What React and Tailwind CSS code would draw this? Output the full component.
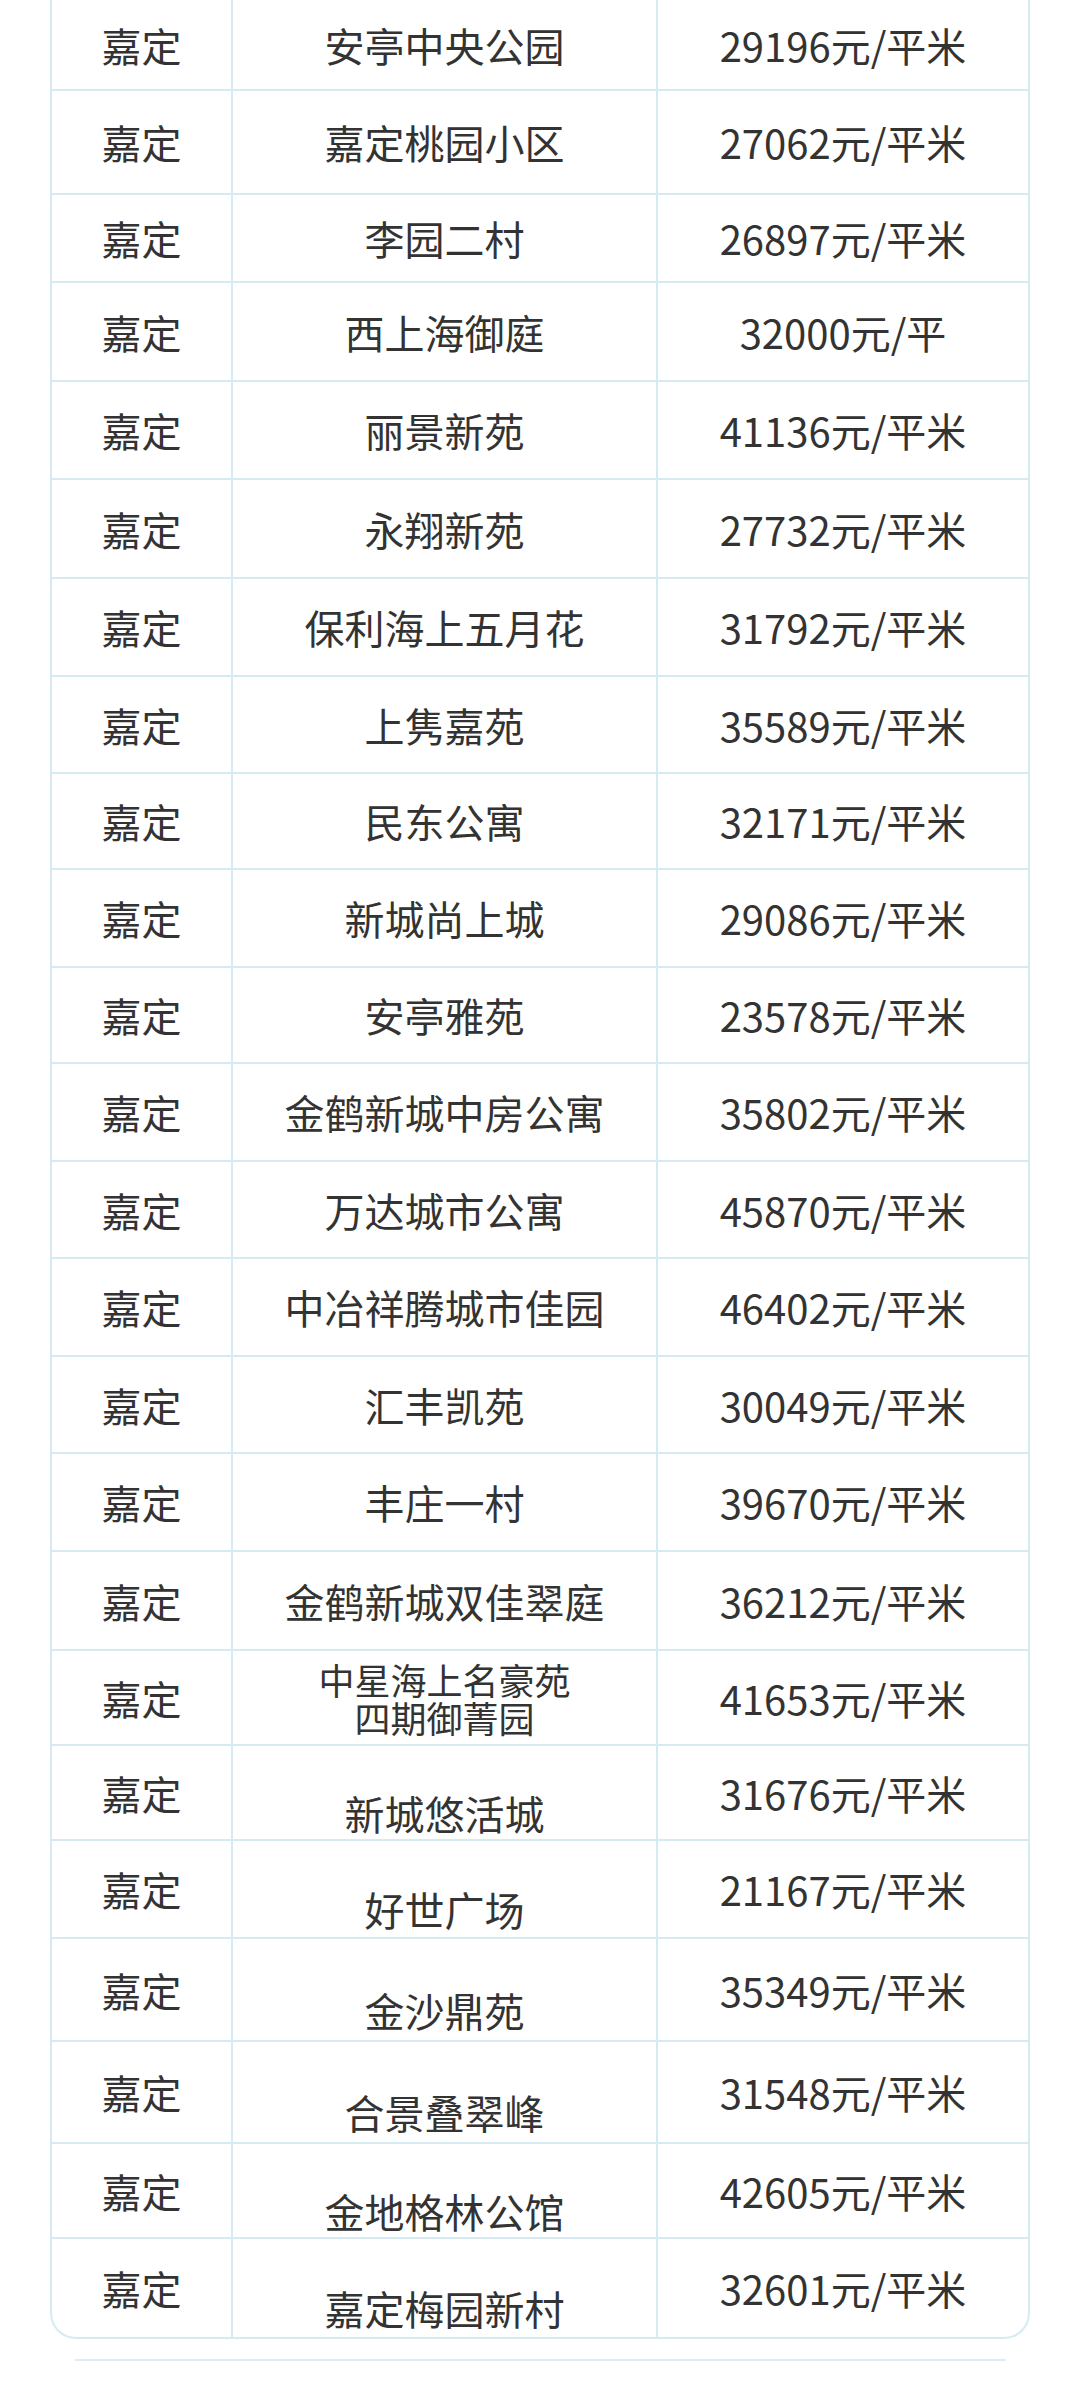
import React from "react";

// 嘉定 小区均价表（截图中段）
const ROWS = [
  { name: "安亭中央公园", price: "29196元/平米", h: 89, first: true },
  { name: "嘉定桃园小区", price: "27062元/平米", h: 104 },
  { name: "李园二村", price: "26897元/平米", h: 88 },
  { name: "西上海御庭", price: "32000元/平", h: 99 },
  { name: "丽景新苑", price: "41136元/平米", h: 98 },
  { name: "永翔新苑", price: "27732元/平米", h: 99 },
  { name: "保利海上五月花", price: "31792元/平米", h: 98 },
  { name: "上隽嘉苑", price: "35589元/平米", h: 97 },
  { name: "民东公寓", price: "32171元/平米", h: 96 },
  { name: "新城尚上城", price: "29086元/平米", h: 98 },
  { name: "安亭雅苑", price: "23578元/平米", h: 96 },
  { name: "金鹤新城中房公寓", price: "35802元/平米", h: 98 },
  { name: "万达城市公寓", price: "45870元/平米", h: 97 },
  { name: "中冶祥腾城市佳园", price: "46402元/平米", h: 98 },
  { name: "汇丰凯苑", price: "30049元/平米", h: 97 },
  { name: "丰庄一村", price: "39670元/平米", h: 98 },
  { name: "金鹤新城双佳翠庭", price: "36212元/平米", h: 99 },
  { name: ["中星海上名豪苑", "四期御菁园"], price: "41653元/平米", h: 95 },
  { name: "新城悠活城", price: "31676元/平米", h: 95, shift: true },
  { name: "好世广场", price: "21167元/平米", h: 98, shift: true },
  { name: "金沙鼎苑", price: "35349元/平米", h: 103, shift: true },
  { name: "合景叠翠峰", price: "31548元/平米", h: 102, shift: true },
  { name: "金地格林公馆", price: "42605元/平米", h: 95, shift: true },
  { name: "嘉定梅园新村", price: "32601元/平米", h: 100, shift: true },
];

const FONT = { fontFamily: '"Noto Sans CJK SC", "Noto Sans", sans-serif' };

function Row({ row }) {
  const twoLine = Array.isArray(row.name);
  return (
    <div
      className={[
        "grid grid-cols-[181px_425px_370px] text-[#333333] text-[40px] leading-none",
        row.first ? "" : "border-t-2 border-[#d6eaf1]",
      ].join(" ")}
      style={{ height: row.h }}
    >
      <div className="flex items-center justify-center border-r-2 border-[#d6eaf1]">嘉定</div>
      <div
        className={[
          "flex flex-col items-center justify-center border-r-2 border-[#d6eaf1]",
          row.shift ? "pt-[40px]" : "",
        ].join(" ")}
      >
        {twoLine ? (
          row.name.map((t) => (
            <span key={t} className="text-[36px] leading-[38px]">
              {t}
            </span>
          ))
        ) : (
          <span>{row.name}</span>
        )}
      </div>
      <div className="flex items-center justify-center">{row.price}</div>
    </div>
  );
}

export default function App() {
  return (
    <div className="w-[1080px] h-[2383px] bg-white overflow-hidden" style={FONT}>
      <div className="ml-[50px] w-[980px] border-x-2 border-b-2 border-[#d6eaf1] rounded-b-[26px] bg-white">
        {ROWS.map((r, i) => (
          <Row key={i} row={r} />
        ))}
      </div>
      <div className="mt-[20px] ml-[75px] w-[931px] h-[2px] bg-[#dcedf3]" />
    </div>
  );
}
